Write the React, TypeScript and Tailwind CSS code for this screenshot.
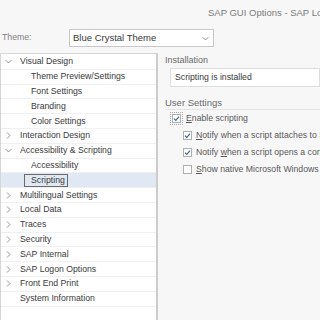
type Row = { label: string; level: 1 | 2; chev?: "down" | "right"; selected?: boolean };

const rows: Row[] = [
  { label: "Visual Design", level: 1, chev: "down" },
  { label: "Theme Preview/Settings", level: 2 },
  { label: "Font Settings", level: 2 },
  { label: "Branding", level: 2 },
  { label: "Color Settings", level: 2 },
  { label: "Interaction Design", level: 1, chev: "right" },
  { label: "Accessibility & Scripting", level: 1, chev: "down" },
  { label: "Accessibility", level: 2 },
  { label: "Scripting", level: 2, selected: true },
  { label: "Multilingual Settings", level: 1, chev: "right" },
  { label: "Local Data", level: 1, chev: "right" },
  { label: "Traces", level: 1, chev: "right" },
  { label: "Security", level: 1, chev: "right" },
  { label: "SAP Internal", level: 1, chev: "right" },
  { label: "SAP Logon Options", level: 1, chev: "right" },
  { label: "Front End Print", level: 1, chev: "right" },
  { label: "System Information", level: 1 },
];

function Chevron({ dir }: { dir: "down" | "right" }) {
  return (
    <svg width="7" height="7" viewBox="0 0 7 7" className="shrink-0">
      {dir === "down" ? (
        <polyline points="0.5,2 3.5,5 6.5,2" fill="none" stroke="#8a8a8a" strokeWidth="0.9" />
      ) : (
        <polyline points="2,0.5 5,3.5 2,6.5" fill="none" stroke="#8a8a8a" strokeWidth="0.9" />
      )}
    </svg>
  );
}

function Check({ checked, focus }: { checked: boolean; focus?: boolean }) {
  return (
    <span className="relative w-[9px] h-[9px] shrink-0 border border-[#b0b0b0] bg-white flex items-center justify-center">
      {focus && <span className="absolute -inset-[3px] border border-dotted border-[#a5a5a5]" />}
      {checked && (
        <svg width="7" height="7" viewBox="0 0 7 7">
          <polyline points="1,3.6 2.8,5.4 6,1.6" fill="none" stroke="#3a6690" strokeWidth="1.1" />
        </svg>
      )}
    </span>
  );
}

export default function App() {
  return (
    <div className="w-[320px] h-[320px] overflow-hidden bg-[#f7f7f7] text-[#3a3a3a] font-['Liberation_Sans',Arial,sans-serif]">
      <div className="h-[29px] pl-[208px] pt-[7px] text-[9.5px] leading-[12px] text-[#7a7a7a] whitespace-nowrap">
        SAP GUI Options - SAP Logon 750
      </div>

      <div className="flex items-center h-[18px]">
        <span className="w-[69px] pl-[2px] text-[8.7px] text-[#808080]">Theme:</span>
        <div className="w-[145px] h-[18px] border border-[#c8c8c8] bg-white flex items-center justify-between pl-[3px] pr-[4px]">
          <span className="text-[9.5px] text-[#3a3a3a]">Blue Crystal Theme</span>
          <Chevron dir="down" />
        </div>
      </div>

      <div className="flex mt-[6px]">
        <div className="w-[158px] h-[267px] shrink-0 bg-white border-l border-t border-[#d6d6d6] border-r-2 border-r-[#cccccc] pt-[1px]">
          {rows.map((r) => (
            <div
              key={r.label}
              className={`h-[14.8px] flex items-center border-b border-[#f0f0f0] text-[8.7px] whitespace-nowrap ${r.selected ? "bg-[#e0e9f3]" : ""}`}
            >
              <span className="w-[18px] pl-[4px] flex items-center shrink-0">{r.chev && <Chevron dir={r.chev} />}</span>
              {r.level === 2 ? (
                r.selected ? (
                  <span className="ml-[5px] pl-[6px] pr-[2px] h-[13px] flex items-center border border-[#6a6a6a]">{r.label}</span>
                ) : (
                  <span className="ml-[12px]">{r.label}</span>
                )
              ) : (
                <span className="ml-[1px]">{r.label}</span>
              )}
            </div>
          ))}
        </div>

        <div className="flex-1 pl-[7px] min-w-0">
          <div className="mt-[1px] h-[12px] leading-[12px] text-[9px] text-[#6a6a6a]">Installation</div>
          <div className="mt-[2px] ml-[5px] h-[19px] border border-[#dedede] bg-white flex items-center pl-[4px] text-[8.7px] whitespace-nowrap">
            Scripting is installed
          </div>

          <div className="mt-[10px] h-[13px] leading-[12px] text-[9.5px] text-[#6a6a6a] border-b border-[#e4e4e4]">User Settings</div>

          <div className="text-[8.7px] text-[#5a5a5a] whitespace-nowrap">
            <div className="h-[17px] flex items-center pl-[7px] gap-[5px]">
              <Check checked focus />
              <span>
                <span className="underline">E</span>nable scripting
              </span>
            </div>
            <div className="h-[17px] flex items-center pl-[18px] gap-[4px]">
              <Check checked />
              <span>
                <span className="underline">N</span>otify when a script attaches to SAP GUI
              </span>
            </div>
            <div className="h-[17px] flex items-center pl-[18px] gap-[4px]">
              <Check checked />
              <span>
                Notify <span className="underline">w</span>hen a script opens a connection
              </span>
            </div>
            <div className="h-[17px] flex items-center pl-[18px] gap-[4px]">
              <Check checked={false} />
              <span>
                <span className="underline">S</span>how native Microsoft Windows dialogs
              </span>
            </div>
          </div>
        </div>
      </div>
    </div>
  );
}
